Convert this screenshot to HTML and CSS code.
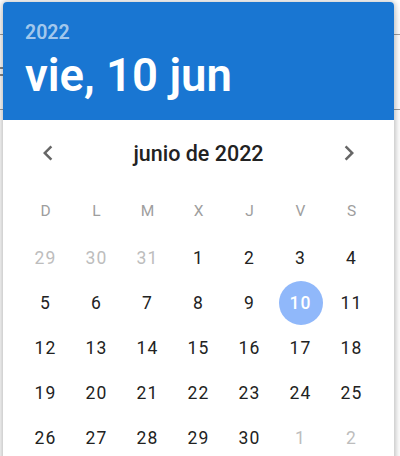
FILE: index.html
```html
<!DOCTYPE html>
<html lang="es">
<head>
<meta charset="utf-8">
<link rel="stylesheet" href="styles.css">
</head>
<body>
<div class="backdrop">
  <span class="bg-line bg-line-top"></span>
  <span class="bg-line bg-line-bottom"></span>
  <span class="bg-glyph"></span>
</div>
<div class="dialog">
  <header class="head">
    <div class="year">2022</div>
    <div class="date">vie, 10 jun</div>
  </header>
  <section class="body">
    <div class="nav">
      <button class="arrow" aria-label="Mes anterior">
        <svg viewBox="0 0 24 24" width="24" height="24"><path d="M15.41 7.41 14 6l-6 6 6 6 1.41-1.41L10.83 12z"/></svg>
      </button>
      <div class="month">junio de 2022</div>
      <button class="arrow" aria-label="Mes siguiente">
        <svg viewBox="0 0 24 24" width="24" height="24"><path d="M10 6 8.59 7.41 13.17 12l-4.58 4.59L10 18l6-6z"/></svg>
      </button>
    </div>
    <div class="grid">
      <span class="wd">D</span><span class="wd">L</span><span class="wd">M</span><span class="wd">X</span><span class="wd">J</span><span class="wd">V</span><span class="wd">S</span>
      <span class="day out">29</span><span class="day out">30</span><span class="day out">31</span><span class="day">1</span><span class="day">2</span><span class="day">3</span><span class="day">4</span>
      <span class="day">5</span><span class="day">6</span><span class="day">7</span><span class="day">8</span><span class="day">9</span><span class="day sel">10</span><span class="day">11</span>
      <span class="day">12</span><span class="day">13</span><span class="day">14</span><span class="day">15</span><span class="day">16</span><span class="day">17</span><span class="day">18</span>
      <span class="day">19</span><span class="day">20</span><span class="day">21</span><span class="day">22</span><span class="day">23</span><span class="day">24</span><span class="day">25</span>
      <span class="day">26</span><span class="day">27</span><span class="day">28</span><span class="day">29</span><span class="day">30</span><span class="day out">1</span><span class="day out">2</span>
    </div>
  </section>
</div>
</body>
</html>
```

FILE: styles.css
```css
html, body {
  margin: 0;
  padding: 0;
  width: 400px;
  height: 456px;
  overflow: hidden;
  background: #fff;
  font-family: Roboto, "Liberation Sans", sans-serif;
}

.backdrop {
  position: absolute;
  inset: 0;
}

.bg-line {
  position: absolute;
  left: 0;
  right: 0;
  height: 1px;
  background: #a0a0a0;
}

.bg-line-top { top: 34px; }
.bg-line-bottom { top: 109px; }

.bg-glyph {
  position: absolute;
  left: 0;
  top: 67px;
  width: 3px;
  height: 2px;
  background: #888;
  box-shadow: 0 7px 0 #888;
}

.dialog {
  position: relative;
  margin: 2px 0 0 3px;
  width: 391px;
  height: 480px;
  background: #fff;
  border-radius: 4px 4px 0 0;
  box-shadow: 0 0 4px 2px rgba(0, 0, 0, 0.16), 0 6px 12px rgba(0, 0, 0, 0.12);
}

.head {
  background: #1976d2;
  color: #fff;
  border-radius: 4px 4px 0 0;
  height: 118px;
  box-sizing: border-box;
  padding: 19px 22px 0;
}

.year {
  font-size: 19.5px;
  font-weight: 600;
  line-height: 24px;
  color: rgba(255, 255, 255, 0.62);
}

.date {
  font-size: 45.5px;
  font-weight: 600;
  line-height: 56px;
  margin-top: 3px;
  letter-spacing: 0;
}

.body {
  padding: 0 17px;
}

.nav {
  display: flex;
  align-items: center;
  justify-content: space-between;
  height: 66px;
  padding: 0 13px;
}

.arrow {
  border: 0;
  background: none;
  padding: 0;
  width: 30px;
  height: 30px;
  display: flex;
  align-items: center;
  justify-content: center;
  fill: #666;
}

.arrow svg {
  width: 30px;
  height: 30px;
}

.month {
  font-size: 21.5px;
  font-weight: 500;
  color: #222;
}

.grid {
  display: grid;
  grid-template-columns: repeat(7, 51px);
  grid-auto-rows: 45px;
  justify-items: center;
  align-items: center;
  padding-top: 4px;
}

.wd {
  font-size: 15.5px;
  color: #9e9e9e;
  height: 45px;
  line-height: 45px;
  margin-top: -3px;
}

.day {
  width: 44px;
  height: 44px;
  border-radius: 50%;
  display: flex;
  align-items: center;
  justify-content: center;
  font-size: 17.5px;
  letter-spacing: 0.06em;
  color: #222;
}

.day.out {
  color: #bdbdbd;
}

.day.sel {
  background: #90b8fa;
  color: #fff;
  font-weight: 500;
}
```
